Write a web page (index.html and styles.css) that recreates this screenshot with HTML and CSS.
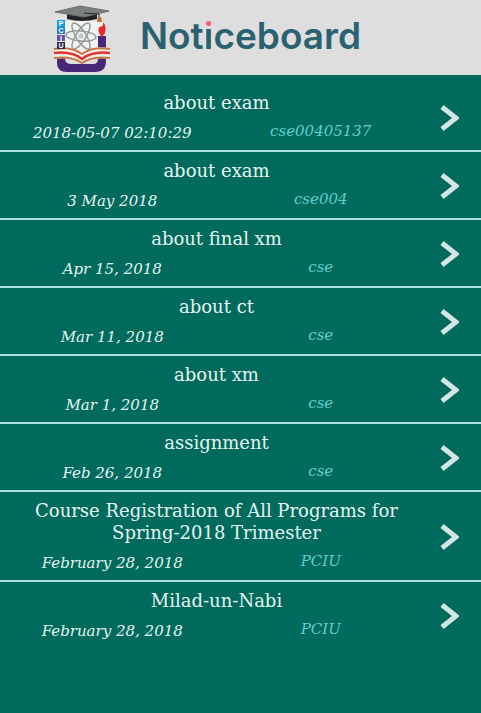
FILE: index.html
```html
<!DOCTYPE html>
<html lang="en">
<head>
<meta charset="utf-8">
<meta name="viewport" content="width=device-width, initial-scale=1">
<title>Noticeboard</title>
<link rel="stylesheet" href="styles.css">
</head>
<body>
<svg width="0" height="0" class="defs" aria-hidden="true">
  <symbol id="chevron" viewBox="0 0 20 28"><path d="M3 3 17 14 3 25" fill="none" stroke="#d3e6e3" stroke-width="5"/></symbol>
</svg>
<header class="header">
  <svg class="logo" viewBox="0 0 60 70" role="img" aria-label="PCIU">
    <rect x="6" y="18" width="45" height="34" fill="#f1f3f3"/>
    <path d="M5 54V60Q5 69 15 69H43Q54 69 54 58V33H46V56Q46 61 41 61H20Q13 61 13 56V54Z" fill="#472878"/>
    <path d="M15 10V16Q30 20 45 16V10Z" fill="#202224"/>
    <path d="M3 9 28 3 57 8 32 14Z" fill="#7b7f80" stroke="#6b6f70" stroke-width="1"/>
    <path d="M32 10 47 11V16" fill="none" stroke="#222" stroke-width="1"/>
    <path d="M46 14H49L50 19H45Z" fill="#b97035"/>
    <path d="M51 19Q55 24 53 30L50 34Q45 29 47 24Q52 24 51 19Z" fill="#e82c2b"/>
    <g fill="none" stroke="#96999b" stroke-width="1.500">
      <ellipse cx="29" cy="33" rx="15" ry="5" transform="rotate(5 29 33)"/>
      <ellipse cx="29" cy="33" rx="15" ry="5" transform="rotate(58 29 33)"/>
      <ellipse cx="29" cy="33" rx="15" ry="5" transform="rotate(122 29 33)"/>
    </g>
    <circle cx="29" cy="33" r="2.500" fill="#c2c5c7"/>
    <path d="M2 45Q20 42 30 50Q40 42 58 45V56Q41 53 30 61Q19 53 2 56Z" fill="#f6efe8"/>
    <g fill="none" stroke-width="2">
      <path d="M2 46Q20 43 30 51Q40 43 58 46" stroke="#c57443"/>
      <path d="M2 50Q20 48 30 56Q40 48 58 50" stroke="#df3431" stroke-width="2.500"/>
      <path d="M2 55Q20 53 30 60Q40 53 58 55" stroke="#c57443"/>
    </g>
    <path d="M5 17H13V24H5Z" fill="#159cdb"/>
    <path d="M5 24H13V31H5Z" fill="#2480c3"/>
    <path d="M5 32H13V38H5Z" fill="#6554a4"/>
    <path d="M5 39H13V46H5Z" fill="#292957"/>
    <g class="logo-letters"><text x="9" y="23">P</text><text x="9" y="30">C</text><text x="9" y="38">I</text><text x="9" y="45">U</text></g>
  </svg>
  <h1 class="brand">Not<span class="brand-i">i</span>ceboard</h1>
</header>
<main class="notices">
  <a class="notice" href="#n1"><div class="body"><h2 class="title">about exam</h2><div class="meta"><time class="date">2018-05-07 02:10:29</time><span class="source">cse00405137</span></div></div><svg class="arrow" aria-hidden="true"><use href="#chevron"/></svg></a>
  <a class="notice" href="#n2"><div class="body"><h2 class="title">about exam</h2><div class="meta"><time class="date">3 May 2018</time><span class="source">cse004</span></div></div><svg class="arrow" aria-hidden="true"><use href="#chevron"/></svg></a>
  <a class="notice" href="#n3"><div class="body"><h2 class="title">about final xm</h2><div class="meta"><time class="date">Apr 15, 2018</time><span class="source">cse</span></div></div><svg class="arrow" aria-hidden="true"><use href="#chevron"/></svg></a>
  <a class="notice" href="#n4"><div class="body"><h2 class="title">about ct</h2><div class="meta"><time class="date">Mar 11, 2018</time><span class="source">cse</span></div></div><svg class="arrow" aria-hidden="true"><use href="#chevron"/></svg></a>
  <a class="notice" href="#n5"><div class="body"><h2 class="title">about xm</h2><div class="meta"><time class="date">Mar 1, 2018</time><span class="source">cse</span></div></div><svg class="arrow" aria-hidden="true"><use href="#chevron"/></svg></a>
  <a class="notice" href="#n6"><div class="body"><h2 class="title">assignment</h2><div class="meta"><time class="date">Feb 26, 2018</time><span class="source">cse</span></div></div><svg class="arrow" aria-hidden="true"><use href="#chevron"/></svg></a>
  <a class="notice" href="#n7"><div class="body"><h2 class="title">Course Registration of All Programs for Spring-2018 Trimester</h2><div class="meta"><time class="date">February 28, 2018</time><span class="source">PCIU</span></div></div><svg class="arrow" aria-hidden="true"><use href="#chevron"/></svg></a>
  <a class="notice" href="#n8"><div class="body"><h2 class="title">Milad-un-Nabi</h2><div class="meta"><time class="date">February 28, 2018</time><span class="source">PCIU</span></div></div><svg class="arrow" aria-hidden="true"><use href="#chevron"/></svg></a>
</main>
</body>
</html>
```
FILE: styles.css
```css
* { box-sizing: border-box; }
body {
  margin: 0;
  min-height: 100vh;
  background: #006a5c;
  font-family: "DejaVu Serif", serif;
}
.defs { position: absolute; }
.header {
  display: flex;
  align-items: center;
  gap: 28px;
  height: 75px;
  padding-left: 52px;
  background: #dedede;
}
.logo { width: 60px; height: 70px; flex: none; }
.logo-letters {
  fill: #fff;
  font: bold 7px "Liberation Sans", sans-serif;
  text-anchor: middle;
}
.brand {
  margin: 0;
  padding-bottom: 4px;
  color: #2a6272;
  font: 600 37px/44px Inter, sans-serif;
}
.brand-i {
  background: linear-gradient(#ff5f73 16px, #2a6272 16px);
  background-clip: text;
  -webkit-background-clip: text;
  color: transparent;
}
.notices { padding-top: 9px; }
.notice {
  display: flex;
  align-items: center;
  padding: 8px 8px 6px;
  border-bottom: 2px solid #a9dfdd;
  color: #e6f5f1;
  text-decoration: none;
}
.notice:last-child { border-bottom: 0; }
.body { flex: 1; min-width: 0; text-align: center; }
.title {
  margin: 0;
  padding: 0 16px;
  font-size: 18px;
  font-weight: 400;
  line-height: 22px;
}
.meta {
  display: grid;
  grid-template-columns: 1fr 1fr;
  padding-top: 6px;
  font-size: 15px;
  font-style: italic;
  line-height: 22px;
}
.date { padding-top: 2px; }
.source { color: #5fcfcd; }
.arrow { width: 20px; height: 28px; margin: 0 14px; flex: none; }
```
